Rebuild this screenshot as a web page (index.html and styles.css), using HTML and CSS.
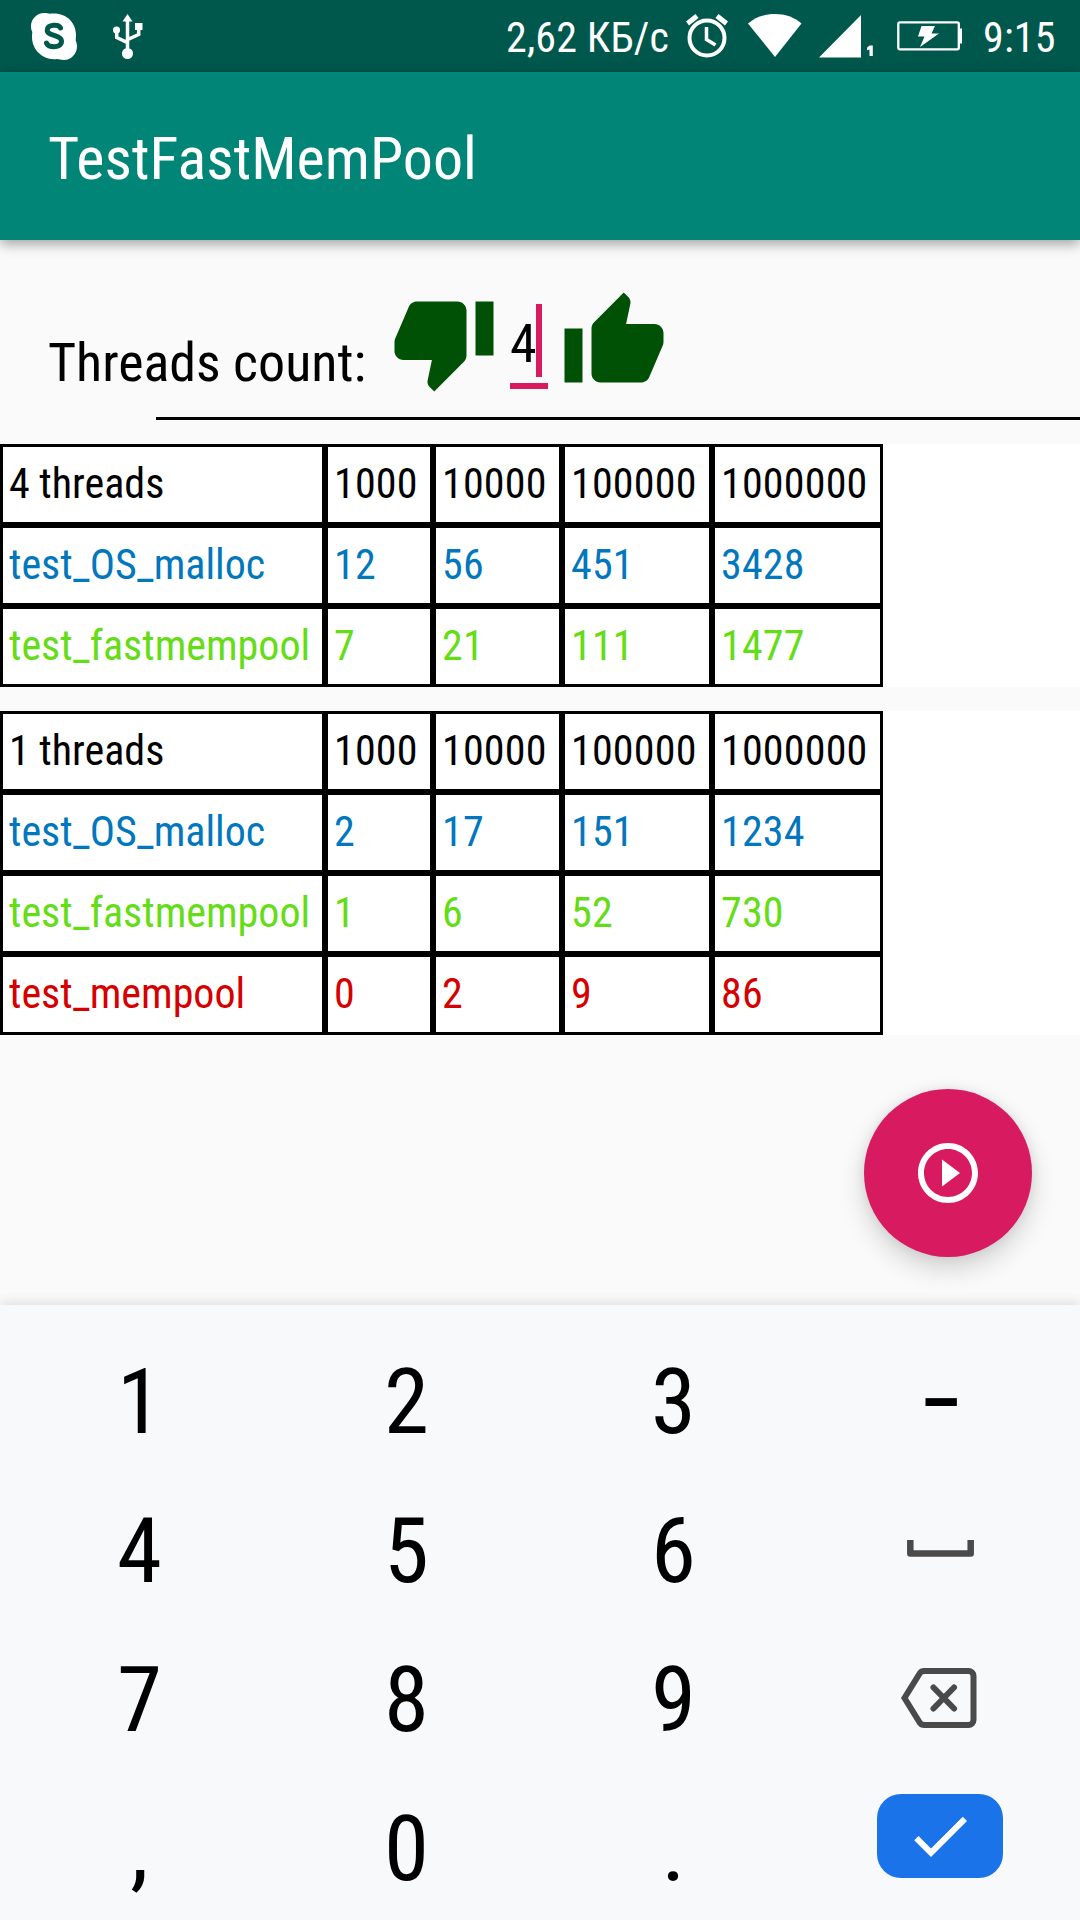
FILE: index.html
```html
<!DOCTYPE html>
<html lang="ru">
<head>
<meta charset="utf-8">
<title>TestFastMemPool</title>
<link rel="stylesheet" href="styles.css">
</head>
<body>
<div class="status-bar">
  <svg class="ic-skype" width="48" height="48" viewBox="0 0 48 48"><path fill="#fff" d="M14 1c3 0 4 .7 6 .7 1-.2 3-.2 4-.2C37 1.500 46 11 46 23c0 2-.3 4-.3 5.500.8 2 1.300 3.500 1.300 6C47 42 41 48 34 48c-3 0-5-.8-7-1-1 .2-2 .2-3 .2C12 47 2 37.500 2 25c0-2 .2-4 .3-5C1.300 18 1 16 1 14 1 7 7 1 14 1z"/><path fill="none" stroke="#00574b" stroke-width="5" stroke-linecap="round" d="M30.500 16c-1-2.500-4-3-7-2.800-4 .2-6.500 2.300-6.300 5.100.3 6.200 14.300 4.200 14.300 11 0 3.700-3.500 5.500-7.500 5.500s-6.500-1.200-7.500-3.800"/></svg>
  <svg class="ic-usb" width="30" height="46" viewBox="0 0 30 46"><g fill="#fff"><path d="M14.500 0l5 7.500h-10z"/><path d="M22 9h7.500v7H22z"/><circle cx="3.500" cy="16" r="3.600"/><circle cx="14.500" cy="39.500" r="5.500"/></g><path fill="none" stroke="#fff" stroke-width="3.500" d="M14.500 5v33M3.700 17v6.500l10.800 5.200M25.700 14v6.500l-11.200 5.200"/></svg>
  <span class="speed">2,62 КБ/с</span>
  <svg class="ic-alarm" width="42" height="44" viewBox="0 0 42 44"><g fill="none" stroke="#fff"><circle cx="21" cy="24" r="17.500" stroke-width="4"/><path stroke-width="5" d="M1.500 9.500l9.500-7.500M40.500 9.500L31 2"/><path stroke-width="3.500" d="M20.500 13v12.500l9 5.500"/></g></svg>
  <svg class="ic-wifi" width="54" height="44" viewBox="0 0 54 44"><path fill="#fff" d="M0 9.500C8 3 17 0 27 0s19 3 26.500 9.500L27 43z"/></svg>
  <svg class="ic-signal" width="56" height="43" viewBox="0 0 56 43"><path fill="#fff" d="M0 42.500L42 0v42.500zM50.500 30.500h3.300V41h-3.300v-6.500l-2.500.8v-2.600z"/></svg>
  <svg class="ic-battery" width="66" height="30" viewBox="0 0 66 30"><rect x="1.300" y="1.300" width="60.500" height="27" rx="1.500" fill="none" stroke="#fff" stroke-width="2.300"/><path fill="#fff" d="M62 7.500h3v15h-3zM24.500 5H38l-3.500 7.500H42L23 26l4.500-10.500H21z"/></svg>
  <span class="clock">9:15</span>
</div>
<div class="app-bar">TestFastMemPool</div>
<div class="content">
  <div class="count-row">
    <span class="count-label">Threads count:</span>
    <svg class="thumb-down" width="108" height="108" viewBox="0 0 24 24"><path d="M15 3H6c-.83 0-1.540.5-1.840 1.220l-3.020 7.050c-.09.23-.14.47-.14.73v2c0 1.100.9 2 2 2h6.310l-.95 4.570-.03.32c0 .41.17.79.44 1.060L9.830 23l6.590-6.590c.36-.36.58-.86.58-1.410V5c0-1.100-.9-2-2-2zm4 0v12h4V3h-4z"/></svg>
    <div class="field">4<i class="caret"></i></div>
    <svg class="thumb-up" width="108" height="108" viewBox="0 0 24 24"><path d="M1 21h4V9H1v12zm22-11c0-1.100-.9-2-2-2h-6.310l.95-4.570.03-.32c0-.41-.17-.79-.44-1.060L14.170 1 7.590 7.590C7.220 7.950 7 8.450 7 9v10c0 1.100.9 2 2 2h9c.83 0 1.540-.5 1.840-1.220l3.020-7.050c.09-.23.14-.47.14-.73v-2z"/></svg>
  </div>
  <div class="line"></div>
  <div class="grid">
    <div>4 threads</div><div class="n">1000</div><div class="n">10000</div><div class="n">100000</div><div class="n">1000000</div>
    <div class="os">test_OS_malloc</div><div class="os n">12</div><div class="os n">56</div><div class="os n">451</div><div class="os n">3428</div>
    <div class="fast">test_fastmempool</div><div class="fast n">7</div><div class="fast n">21</div><div class="fast n">111</div><div class="fast n">1477</div>
  </div>
  <div class="grid">
    <div>1 threads</div><div class="n">1000</div><div class="n">10000</div><div class="n">100000</div><div class="n">1000000</div>
    <div class="os">test_OS_malloc</div><div class="os n">2</div><div class="os n">17</div><div class="os n">151</div><div class="os n">1234</div>
    <div class="fast">test_fastmempool</div><div class="fast n">1</div><div class="fast n">6</div><div class="fast n">52</div><div class="fast n">730</div>
    <div class="mem">test_mempool</div><div class="mem n">0</div><div class="mem n">2</div><div class="mem n">9</div><div class="mem n">86</div>
  </div>
  <div class="fab"><svg width="72" height="72" viewBox="0 0 24 24"><path fill="#fff" d="M10 16.500l6-4.500-6-4.500v9zM12 2C6.480 2 2 6.480 2 12s4.480 10 10 10 10-4.480 10-10S17.520 2 12 2zm0 18c-4.410 0-8-3.590-8-8s3.590-8 8-8 8 3.590 8 8-3.590 8-8 8z"/></svg></div>
</div>
<div class="keyboard">
  <div>1</div><div>2</div><div>3</div><div class="dash">–</div>
  <div>4</div><div>5</div><div>6</div><div><svg class="ic-space" width="67" height="18" viewBox="0 0 67 18"><path fill="none" stroke="#4a4a4a" stroke-width="6.500" stroke-linejoin="round" d="M3.300 1v13.500h60.400V1"/></svg></div>
  <div>7</div><div>8</div><div>9</div><div><svg class="ic-back" width="76" height="60" viewBox="0 0 76 60"><g fill="none" stroke="#4a4a4a" stroke-width="6"><path d="M23 3h44.500a5 5 0 0 1 5 5v44a5 5 0 0 1-5 5H23q-2.500 0-4-2L3.500 30 19 5q1.500-2 4-2z"/><path stroke-linecap="round" d="M32.500 19.500l20.500 21M53 19.500l-20.500 21"/></g></svg></div>
  <div>,</div><div>0</div><div>.</div><div><span class="enter"><svg width="72" height="72" viewBox="0 0 24 24"><path fill="#fff" d="M9 16.170L4.830 12l-1.420 1.410L9 19 21 7l-1.410-1.410z"/></svg></span></div>
</div>
</body>
</html>
```
FILE: styles.css
```css
* { box-sizing: border-box; }
body {
  margin: 0;
  width: 1080px;
  height: 1920px;
  overflow: hidden;
  background: #fafafa;
  color: #000;
  font-family: "Roboto Condensed", Roboto, sans-serif;
  font-stretch: 75%;
  display: flex;
  flex-direction: column;
}
svg { display: block; flex: none; }

.status-bar {
  height: 72px;
  background: #00574b;
  color: #fff;
  font-size: 42px;
  line-height: 72px;
  display: flex;
  align-items: flex-start;
  white-space: nowrap;
}
.ic-skype { margin: 12px 0 0 30px; }
.ic-usb { margin: 14px 0 0 35px; }
.speed { width: 180px; margin-left: 363px; margin-top: 2px; letter-spacing: .15px; }
.ic-alarm { margin: 14px 0 0 0; }
.ic-wifi { margin: 14px 0 0 20px; }
.ic-signal { margin: 15px 0 0 17px; }
.ic-battery { margin: 21px 0 0 22px; }
.clock { margin: 2px 0 0 20px; letter-spacing: .15px; }

.app-bar {
  height: 168px;
  flex: none;
  background: #008577;
  color: #fff;
  font-size: 60px;
  line-height: 168px;
  padding: 3px 0 0 48px;
  box-shadow: 0 4px 12px rgba(0, 0, 0, .36);
  z-index: 1;
}

.content { position: relative; height: 1065px; flex: none; }
.count-row { display: flex; height: 177px; align-items: flex-start; }
.count-label {
  width: 342px;
  margin: 91px 0 0 48px;
  font-size: 54px;
  line-height: 64px;
  white-space: nowrap;
}
.thumb-down, .thumb-up { margin-top: 48px; fill: #005005; }
.thumb-up { margin-left: 12px; }
.field {
  width: 38px;
  height: 85px;
  margin: 64px 0 0 12px;
  border-bottom: 6px solid #d81b60;
  display: flex;
  font-size: 54px;
  line-height: 80px;
}
.caret { position: absolute; left: 536px; top: 64px; width: 6px; height: 73px; background: #d81b60; }
.line { height: 3px; margin-left: 156px; background: #000; }

.grid {
  display: grid;
  grid-template-columns: 325px 108px 129px 150px 171px;
  grid-auto-rows: 81px;
  background: #fff;
  margin-top: 24px;
  font-size: 42px;
  line-height: 49px;
}
.grid > div { border: 3px solid #000; padding: 12px 0 0 6px; white-space: nowrap; }
.grid > .n { letter-spacing: .2px; }
.os { color: #0277bd; }
.fast { color: #64dd17; }
.mem { color: #d50000; }

.fab {
  position: absolute;
  left: 864px;
  top: 849px;
  width: 168px;
  height: 168px;
  border-radius: 50%;
  background: #d81b60;
  display: flex;
  align-items: center;
  justify-content: center;
  box-shadow: 0 12px 26px rgba(0, 0, 0, .16), 0 0 12px rgba(0, 0, 0, .08);
}

.keyboard {
  height: 615px;
  flex: none;
  background: #f8f9fb;
  box-shadow: 0 -2px 12px rgba(0, 0, 0, .12);
  padding: 23px 5px 0 6px;
  display: grid;
  grid-template-columns: repeat(4, 267px);
  grid-auto-rows: 149px;
  font-size: 91px;
  line-height: 149px;
  text-align: center;
}
.keyboard > div { height: 149px; }
.keyboard > .dash { font-size: 74px; font-weight: 600; line-height: 149px; }
.ic-space { margin: 62px auto 0 100px; }
.ic-back { margin: 42px auto 0 94px; }
.enter {
  display: flex;
  justify-content: center;
  align-items: center;
  width: 126px;
  height: 84px;
  margin: 19px auto 0 70px;
  border-radius: 24px;
  background: #1a73e8;
}
```
